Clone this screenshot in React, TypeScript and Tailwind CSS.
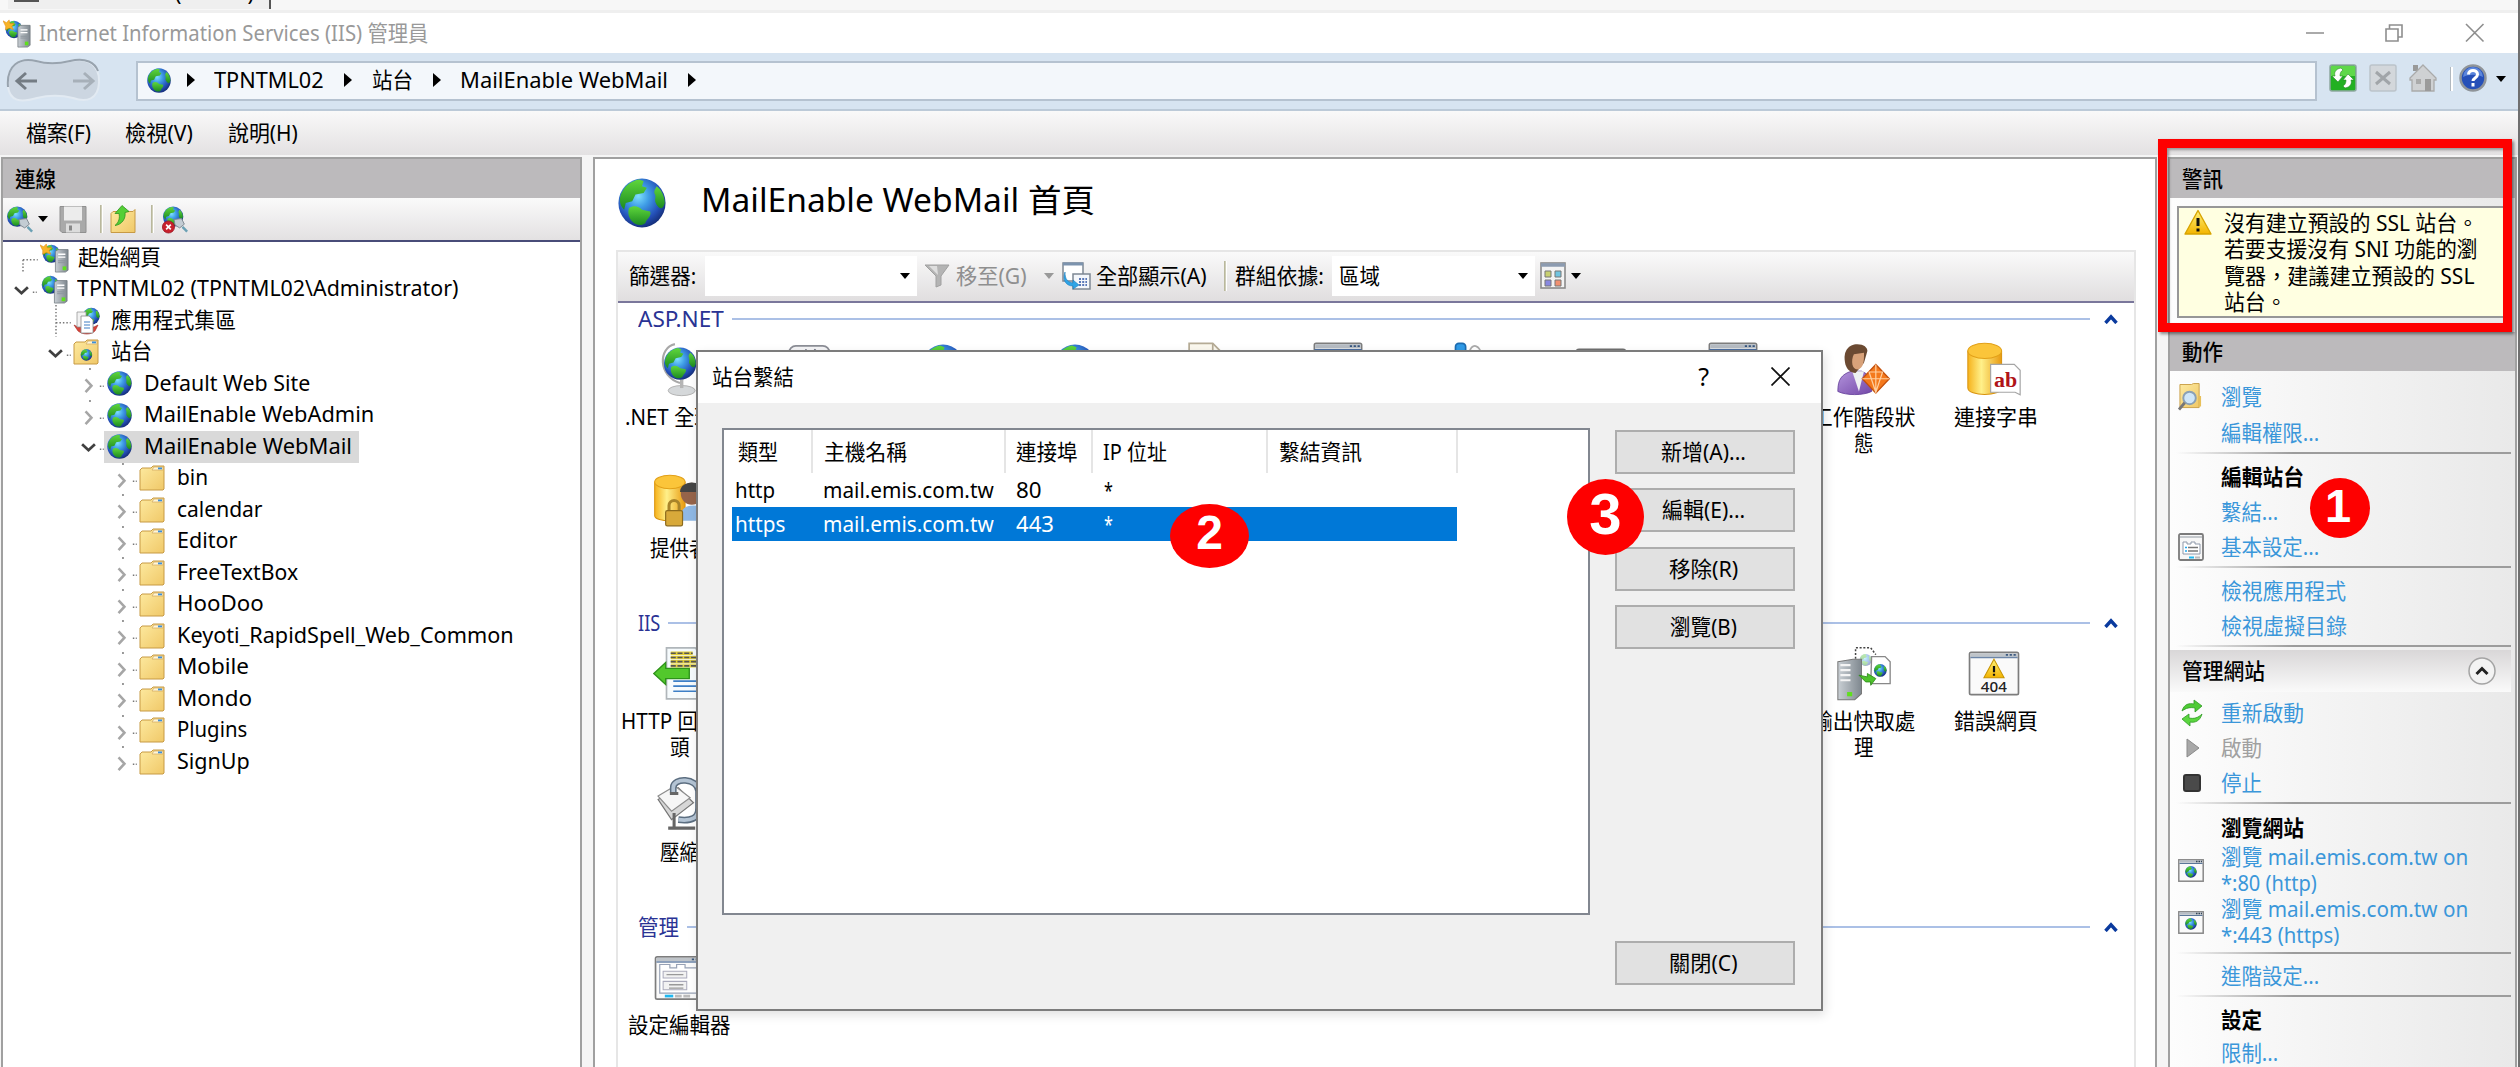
import { useLayoutEffect, useRef, useState, type ReactNode } from "react";

/* Single line of text stretched to a fixed width. */
function T({ w, children, className = "" }: { w: number; children: ReactNode; className?: string }) {
  const ref = useRef<HTMLSpanElement>(null);
  const [k, setK] = useState(1);
  useLayoutEffect(() => {
    const el = ref.current;
    if (el && el.offsetWidth) setK(w / el.offsetWidth);
  }, [w]);
  return (
    <span className={`block shrink-0 whitespace-nowrap ${className}`} style={{ width: w }}>
      <span ref={ref} className="inline-block origin-left" style={{ transform: `scaleX(${k})` }}>
        {children}
      </span>
    </span>
  );
}

function Defs() {
  return (
    <svg className="absolute size-0" aria-hidden="true">
      <defs>
        <radialGradient id="sea" cx="0.42" cy="0.36" r="0.65">
          <stop offset="0" stopColor="#7fe0ff" />
          <stop offset="0.35" stopColor="#3f9de6" />
          <stop offset="0.75" stopColor="#2450b8" />
          <stop offset="1" stopColor="#16307c" />
        </radialGradient>
        <linearGradient id="land" x1="0" y1="0" x2="0" y2="1">
          <stop offset="0" stopColor="#5fd63c" />
          <stop offset="1" stopColor="#1c8a20" />
        </linearGradient>
        <linearGradient id="fold" x1="0" y1="0" x2="1" y2="1">
          <stop offset="0" stopColor="#fdeaa0" />
          <stop offset="1" stopColor="#f0c868" />
        </linearGradient>
        <linearGradient id="gold" x1="0" y1="0" x2="1" y2="0">
          <stop offset="0" stopColor="#f6b21c" />
          <stop offset="0.4" stopColor="#fff08a" />
          <stop offset="1" stopColor="#e89a10" />
        </linearGradient>
        <linearGradient id="steel" x1="0" y1="0" x2="1" y2="0">
          <stop offset="0" stopColor="#c9cfd4" />
          <stop offset="1" stopColor="#7f888f" />
        </linearGradient>
        <linearGradient id="warn" x1="0" y1="0" x2="0" y2="1">
          <stop offset="0" stopColor="#fff27a" />
          <stop offset="1" stopColor="#f3b400" />
        </linearGradient>
        <linearGradient id="purple" x1="0" y1="0" x2="1" y2="1">
          <stop offset="0" stopColor="#b394dc" />
          <stop offset="1" stopColor="#7347a8" />
        </linearGradient>
      </defs>
    </svg>
  );
}

/* Globe in a 32-unit square, reused inside other icons. */
function GlobeG() {
  return (
    <g>
      <circle cx="16" cy="16" r="14.5" fill="url(#sea)" />
      <path d="M3 11C5 6 9 3 14 2l3 1-1 3 3 1-2 3-5 1-2 4-4 1-1 4C2 17 2 14 3 11Z" fill="url(#land)" />
      <path d="M8 19c3-2 6-1 8 1l5 1c1 3-2 4-3 7-3 2-6 1-8-1-2-2-3-5-2-8Z" fill="url(#land)" />
      <path d="M25 6c3 2 5 6 5 10-1 4-3 4-5 1-2-3 0-4-1-6s0-3 1-5Z" fill="url(#land)" />
    </g>
  );
}

function Globe({ className }: { className: string }) {
  return (
    <svg viewBox="0 0 32 32" preserveAspectRatio="none" className={`shrink-0 ${className}`}>
      <GlobeG />
    </svg>
  );
}

function ServerGlobe({ star = false, className = "h-[30px] w-[29px]" }: { star?: boolean; className?: string }) {
  return (
    <svg viewBox="0 0 32 32" preserveAspectRatio="none" className={`shrink-0 ${className}`}>
      <g transform="translate(2 1) scale(.66)">
        <GlobeG />
      </g>
      {star && (
        <path d="M0 2l4 2 3-3 1 4 5 0-3 3 2 4-5-2-4 2 0-4Z" fill="#f8b428" stroke="#e08a10" strokeWidth=".6" />
      )}
      <path d="M17 9l3-2h11v22l-3 2H17Z" fill="url(#steel)" stroke="#6f777d" strokeWidth=".8" />
      <path d="M20 12h8M20 15h8" stroke="#fff" strokeWidth="1.4" />
      <path d="M20 19h8M20 21h8" stroke="#8b949b" strokeWidth="1" />
      <rect x="25" y="25" width="4" height="4" fill="#5fe01c" />
    </svg>
  );
}

function Folder({ globe = false }: { globe?: boolean }) {
  return (
    <svg viewBox="0 0 26 26" className="h-[26px] w-[26px] shrink-0">
      <path d="M1 5l2-2h9l2-2h11v23l-1 1H1Z" fill="url(#fold)" stroke="#c79a45" strokeWidth="1" />
      <path d="M13 5l2-3h9v3Z" fill="#fff6d8" stroke="#d0a860" strokeWidth=".7" />
      <rect x="19" y="2.5" width="4" height="1.8" fill="#3d8fd8" />
      {globe && (
        <g transform="translate(7 9.5) scale(.4)">
          <GlobeG />
        </g>
      )}
    </svg>
  );
}

function AppPool() {
  return (
    <svg viewBox="0 0 28 28" className="h-7 w-7 shrink-0">
      <g transform="translate(9 0) scale(.58)">
        <GlobeG />
      </g>
      <path d="M1 18l4 6c5 4 13 4 17 0l3-6-4 2H5Z" fill="#d9443a" stroke="#a12a24" strokeWidth=".6" />
      <path d="M4 5h9v15H4Z" fill="#f2f2f2" stroke="#999" strokeWidth=".8" />
      <path d="M8 9h8l4 4v13H8Z" fill="#fff" stroke="#8a8a8a" strokeWidth=".8" />
      <path d="M11 15h6M11 18h6M11 21h6" stroke="#3f7fc4" strokeWidth="1.2" />
    </svg>
  );
}

function Caret({ color = "#000", className = "" }: { color?: string; className?: string }) {
  return (
    <svg viewBox="0 0 10 6" className={`h-[6px] w-[10px] shrink-0 ${className}`}>
      <path d="M0 0h10L5 6Z" fill={color} />
    </svg>
  );
}

function Crumb({ className = "" }: { className?: string }) {
  return (
    <svg viewBox="0 0 8 14" className={`h-[14px] w-2 shrink-0 ${className}`}>
      <path d="M0 0L8 7L0 14Z" fill="#000" />
    </svg>
  );
}

function Plug() {
  return (
    <g stroke="#7d878f" fill="#c3ccd3" strokeWidth="1">
      <path d="M14 15l8-1 3 6-5 4-5-3Z" />
      <path d="M23 23l5 5" stroke="#6aa0b4" strokeWidth="2.6" />
    </g>
  );
}

type Node = { icon: "start" | "server" | "pool" | "sites" | "globe" | "folder"; label: string; w: number; sel?: boolean };

const tree: Node[] = [
  { icon: "start", label: "起始網頁", w: 83 },
  { icon: "server", label: "TPNTML02 (TPNTML02\\Administrator)", w: 381 },
  { icon: "pool", label: "應用程式集區", w: 125 },
  { icon: "sites", label: "站台", w: 41 },
  { icon: "globe", label: "Default Web Site", w: 166 },
  { icon: "globe", label: "MailEnable WebAdmin", w: 230 },
  { icon: "globe", label: "MailEnable WebMail", w: 208, sel: true },
  { icon: "folder", label: "bin", w: 31 },
  { icon: "folder", label: "calendar", w: 86 },
  { icon: "folder", label: "Editor", w: 60 },
  { icon: "folder", label: "FreeTextBox", w: 121 },
  { icon: "folder", label: "HooDoo", w: 87 },
  { icon: "folder", label: "Keyoti_RapidSpell_Web_Common", w: 337 },
  { icon: "folder", label: "Mobile", w: 72 },
  { icon: "folder", label: "Mondo", w: 75 },
  { icon: "folder", label: "Plugins", w: 70 },
  { icon: "folder", label: "SignUp", w: 73 },
];

const indent = { start: "pl-[4px]", server: "pl-[3px]", pool: "pl-[37px]", sites: "pl-[37px]", globe: "pl-[70px]", folder: "pl-[103px]" };

function Twisty({ open }: { open: boolean }) {
  return (
    <svg viewBox="0 0 31 32" className="h-[31.5px] w-[31px] shrink-0">
      {open ? (
        <path d="M9 13.5l6.5 6 6.5-6" fill="none" stroke="#404040" strokeWidth="2.8" />
      ) : (
        <>
          <path d="M12.500 11.500l6 6.500-6 6.500" fill="none" stroke="#a6a6a6" strokeWidth="2.600" />
          <path d="M17 0v2" stroke="#777" strokeWidth="1.5" />
        </>
      )}
      <path d="M27 18.500h4" stroke="#777" strokeWidth="1.500" strokeDasharray="1.500 1.500" />
    </svg>
  );
}

function Leaf({ first }: { first: boolean }) {
  return (
    <svg viewBox="0 0 31 32" className="h-[31.5px] w-[31px] shrink-0" fill="none" stroke="#777" strokeWidth="1.5" strokeDasharray="1.5 2">
      <path d={first ? "M16 18h15M16 18v14" : "M16 0v32M16 18h15"} />
    </svg>
  );
}

function TreeRow({ n, first }: { n: Node; first: boolean }) {
  const leaf = n.icon === "start" || n.icon === "pool";
  return (
    <div className={`flex h-[31.5px] items-center ${indent[n.icon]}`}>
      {leaf ? <Leaf first={first} /> : <Twisty open={n.icon === "server" || n.icon === "sites" || !!n.sel} />}
      <div className={`flex h-[31.5px] items-center pr-[7px] pl-[2px] ${n.sel ? "bg-[#d9d9d9]" : ""}`}>
        <div className="flex w-[38px] items-center">
          {n.icon === "start" && <ServerGlobe star />}
          {n.icon === "server" && <ServerGlobe />}
          {n.icon === "pool" && <AppPool />}
          {n.icon === "sites" && <Folder globe />}
          {n.icon === "globe" && <Globe className="h-[27px] w-[27px]" />}
          {n.icon === "folder" && <Folder />}
        </div>
        <T w={n.w} className="-mt-[2px]">{n.label}</T>
      </div>
    </div>
  );
}

function WindowIcon({ children, className = "h-[55px] w-[54px]" }: { children?: ReactNode; className?: string }) {
  return (
    <svg viewBox="0 0 32 32" className={`shrink-0 ${className}`}>
      <rect x="1.500" y="3.500" width="29" height="25" rx="1" fill="#fafafa" stroke="#7d7d7d" strokeWidth="1" />
      <path d="M2 4h28v2H2Z" fill="#bfc4c9" />
      <path d="M2 6.500h28" stroke="#6d86a8" strokeWidth=".8" />
      <path d="M23 5h6" stroke="#3c5a80" strokeWidth="1" strokeDasharray="1.300 1" />
      {children}
    </svg>
  );
}

const pic = "h-[55px] w-[54px] shrink-0";
const featureIcons: Record<string, ReactNode> = {
  net: (
    <svg viewBox="0 0 32 32" className={pic}>
      <ellipse cx="17" cy="28.500" rx="8" ry="3" fill="#d5d8da" stroke="#aaa" strokeWidth=".5" />
      <path d="M16 22h2v5h-2Z" fill="#b5b5b5" />
      <path d="M13 1C3 3 3 20 16 24" fill="none" stroke="#a8a8a8" strokeWidth="1.300" />
      <g transform="translate(5.500 2) scale(.66)">
        <GlobeG />
      </g>
    </svg>
  ),
  doc: (
    <svg viewBox="0 0 32 32" className={pic}>
      <path d="M6 .5h14l5 5V31H6Z" fill="#fbf8ee" stroke="#b5ab95" />
      <path d="M20 .5v5h5" fill="none" stroke="#b5ab95" />
    </svg>
  ),
  papers: (
    <svg viewBox="0 0 32 32" className={pic}>
      <rect x="3" y="2" width="24" height="18" rx="4" fill="#f4f4f6" stroke="#8b8d95" />
      <path d="M7 5h4M13 4v4M18 4l3 3" stroke="#66697a" />
    </svg>
  ),
  globe: <Globe className="h-[55px] w-[50px]" />,
  blue: (
    <svg viewBox="0 0 32 32" className={pic}>
      <rect x="8" y=".5" width="6" height="20" rx="2" fill="#2f9be8" stroke="#1d6cb0" />
      <path d="M16 6c2-6 6-5 8 2" fill="none" stroke="#aaa" />
    </svg>
  ),
  low: (
    <svg viewBox="0 0 32 32" className={pic}>
      <rect x="1" y="4" width="30" height="20" rx="2" fill="#9b9b9b" stroke="#6f6f6f" />
    </svg>
  ),
  win: (
    <svg viewBox="0 0 32 32" className={pic}>
      <rect x="2" y=".5" width="28" height="28" rx="1" fill="#fff" stroke="#7d7d7d" />
      <path d="M2.500 1h27v2.500h-27Z" fill="#b5bbc2" />
      <path d="M2 4.200h28" stroke="#4a6da0" strokeWidth=".8" />
      <path d="M23 2.200h6" stroke="#35557f" strokeDasharray="1.300 1" />
    </svg>
  ),
  user: (
    <svg viewBox="0 0 32 32" className={pic}>
      <path d="M.5 29c0-7 2-10 8-12h6c5 2 6 5 6 12-5 2.500-15 2.500-20 0Z" fill="url(#purple)" stroke="#65409a" strokeWidth=".5" />
      <path d="M9 17l4 12 3-12Z" fill="#eef0f2" />
      <path d="M5 13C3 5 7 1 12 1c4 0 6 2 6 4l-2 7-5 6c-3 0-5-2-6-5Z" fill="#6b4a32" />
      <path d="M10 7l6-1c0 5 0 9-4 10-3 0-4-5-2-9Z" fill="#d8a27a" />
      <path d="M23 13l8 8.500-8 8.500-8-8.500Z" fill="#f4791c" stroke="#c4500c" strokeWidth=".8" />
      <path d="M23 13v17M15 21.500h16M19 17.500h8l-4 12Z" fill="none" stroke="#ffd0a0" strokeWidth=".7" />
    </svg>
  ),
  db: (
    <svg viewBox="0 0 32 32" className={`-ml-[3px] ${pic}`}>
      <path d="M.5 5v22c0 5 20 5 20 0V5Z" fill="url(#gold)" stroke="#d8920c" strokeWidth=".6" />
      <ellipse cx="10.500" cy="5" rx="10" ry="4.500" fill="#fbc53a" stroke="#e2a018" strokeWidth=".6" />
      <path d="M14 13h14l3.500 3.500V31l-3-1.500-14.500 0Z" fill="#fff" stroke="#a5a5a5" strokeWidth=".7" />
      <text x="16" y="26.500" fontFamily="Liberation Serif" fontWeight="700" fontSize="13" fill="#b01418">ab</text>
    </svg>
  ),
  provider: (
    <svg viewBox="0 0 32 32" className={pic}>
      <path d="M1 5v20c0 4 18 4 18 0V5Z" fill="url(#gold)" stroke="#d8920c" strokeWidth=".6" />
      <ellipse cx="10" cy="5" rx="9" ry="4" fill="#fbc53a" stroke="#e2a018" strokeWidth=".6" />
      <path d="M16 28c0-7 3-9 8-9s8 3 8 9Z" fill="#8fb8e4" />
      <circle cx="23" cy="12" r="6.500" fill="#96644a" />
      <path d="M16 11c0-7 13-8 14 0Z" fill="#444" />
      <path d="M9.500 22v-3c0-4 6-4 6 0v3" fill="none" stroke="#a8842a" strokeWidth="1.800" />
      <rect x="7.500" y="22" width="10" height="9" rx="1" fill="#d8a93a" stroke="#8c6a1c" strokeWidth=".7" />
    </svg>
  ),
  http: (
    <svg viewBox="0 0 32 32" className={pic}>
      <path d="M8 .8h17l4 4V31H8Z" fill="#f6fbfd" stroke="#b0b6ba" />
      <path d="M10.500 4h13M10.500 6.500h16M10.500 9h16M10.500 11.500h16" stroke="#e2cf3c" strokeWidth="2" />
      <path d="M10.500 4h13M10.500 6.500h16M10.500 9h16M10.500 11.500h16" stroke="#555" strokeWidth="1" strokeDasharray="3 1" />
      <path d="M.5 16l7-6.500V13h14v6H7.500v3.500Z" fill="#52c82c" stroke="#2e931a" strokeWidth=".8" />
      <path d="M12 20.500h14M12 23.500h14M12 26.500h14" stroke="#3d7fc6" strokeWidth="1" />
    </svg>
  ),
  compress: (
    <svg viewBox="0 0 32 32" className={pic}>
      <path d="M3 13l12-7 9 9-13 10Z" fill="#d7d7d7" stroke="#777" strokeWidth=".7" />
      <path d="M3 11l10-6 9 7-11 8Z" fill="#f6f6f6" stroke="#8d8d8d" strokeWidth=".7" />
      <path d="M12 9V6c0-6 14-6 15 2v10c0 6-4 8-12 7" fill="none" stroke="#5c6e80" strokeWidth="4" />
      <path d="M12 9V6c0-6 14-6 15 2v10c0 6-4 8-12 7" fill="none" stroke="#b4c4d4" strokeWidth="2.200" />
      <path d="M10 9.500h5M12.500 21v9M9 30h16" fill="none" stroke="#666" strokeWidth="1.800" />
    </svg>
  ),
  config: (
    <WindowIcon className="h-[60px] w-[54px]">
      <path d="M4 8h6v2h4V8h5v2h9v15H4Z" fill="#fff" stroke="#98a2b5" strokeWidth=".7" />
      <path d="M6 12h14v4H6ZM6 18h14v5H6Z" fill="#f2f2f2" stroke="#aab" strokeWidth=".6" />
      <path d="M8 14h10M9.500 20h8.500M9.500 22h8.500" stroke="#999" strokeWidth=".8" />
      <path d="M7 26.700h5" stroke="#20b8f0" strokeWidth="1.600" />
      <path d="M13 26.700h4M18 26.700h4" stroke="#bbb" strokeWidth="1.600" />
    </WindowIcon>
  ),
  cache: (
    <svg viewBox="0 0 32 32" className={pic}>
      <path d="M11 16V.8h9l3 4" fill="none" stroke="#444" strokeWidth=".9" strokeDasharray="1.200 1" />
      <g opacity=".4" transform="translate(13 4) scale(.25)">
        <GlobeG />
      </g>
      <path d="M.5 9l9-1.500h5V28l-4 3.500H.5Z" fill="url(#steel)" stroke="#777" strokeWidth=".6" />
      <path d="M2 11h6M2 14h6M2 17h6M2 20h6" stroke="#f4f4f4" strokeWidth="1.300" />
      <rect x="6" y="27" width="3" height="2.500" fill="#5fe01c" />
      <path d="M20.500 6h8l3 3v13H20Z" fill="#fff" stroke="#888" strokeWidth=".8" />
      <g transform="translate(21.500 10) scale(.26)">
        <GlobeG />
      </g>
      <path d="M13 17l5 1v-2l5 3-3 4v-2l-3 0Z" fill="#4fc22c" stroke="#2c8c18" strokeWidth=".5" />
    </svg>
  ),
  error: (
    <WindowIcon className="-ml-[3px] h-[55px] w-[54px]">
      <path d="M16 7.500l6 11H10Z" fill="url(#warn)" stroke="#c89400" strokeWidth=".6" />
      <path d="M16 11.500v3.700M16 16.200v1.200" stroke="#111" strokeWidth="1.300" />
      <text x="8.200" y="26.800" fontFamily="Noto Sans" fontWeight="500" fontSize="9" fill="#222">404</text>
    </WindowIcon>
  ),
};

type Cell = { icon?: string; lines?: [string, number][] };
const blank: Cell = {};
const gap = (n: number): Cell[] => Array.from({ length: n }, () => blank);

function Feature({ c }: { c: Cell }) {
  return (
    <div className="flex h-[131px] w-[131.6px] shrink-0 flex-col items-center">
      <div className="flex h-[55px] w-[54px] items-center justify-center">{c.icon && featureIcons[c.icon]}</div>
      <div className="mt-[7px] flex flex-col items-center">
        {c.lines?.map(([t, w]) => (
          <T key={t} w={w} className="h-[26px] leading-[26px]">{t}</T>
        ))}
      </div>
    </div>
  );
}

function Section({ title, w, rows }: { title: string; w: number; rows: Cell[][] }) {
  return (
    <section className="mb-[3px]">
      <div className="mb-[7px] flex h-[32px] items-center pl-[20px]">
        <T w={w} className="text-[#2a3394]">{title}</T>
        <div className="ml-[8px] h-[2px] flex-1 bg-[#abc0e6]" />
        <svg viewBox="0 0 14 10" className="mr-[16px] ml-[14px] h-[10px] w-[14px]">
          <path d="M1.500 9L7 2.800 12.500 9" fill="none" stroke="#0a3a9e" strokeWidth="3.400" />
        </svg>
      </div>
      {rows.map((r, i) => (
        <div key={i} className="-ml-[4px] flex">
          {r.map((c, j) => (
            <Feature key={j} c={c} />
          ))}
        </div>
      ))}
    </section>
  );
}

function DialogButton({ label, w, className }: { label: string; w: number; className: string }) {
  return (
    <div className={`flex h-[44px] w-[180px] items-center justify-center border-2 border-[#adadad] bg-[#e1e1e1] pr-[3px] pb-[1px] ${className}`}>
      <T w={w}>{label}</T>
    </div>
  );
}

function Dialog() {
  return (
    <div className="absolute top-[350px] left-[696px] h-[661px] w-[1127px] border-2 border-[#7c7c7c] bg-[#f0f0f0] shadow-[2px_4px_10px_rgba(0,0,0,0.12)]">
      <div className="flex h-[51px] items-center bg-white pb-[2px] pl-[14px]">
        <T w={82} className="mr-auto">站台繫結</T>
        <span className="text-[25px] leading-none">?</span>
        <svg viewBox="0 0 19 19" className="mr-[31px] ml-[62px] h-[19px] w-[19px]">
          <path d="M.5.5l18 18M18.500.5l-18 18" stroke="#111" strokeWidth="1.700" />
        </svg>
      </div>
      <div className="flex pt-[25px] pl-[24px]">
        <div className="h-[487px] w-[868px] border-2 border-[#828790] bg-white">
          <div className="flex h-[43px] items-center">
            <div className="flex h-full w-[89px] items-center border-r-2 border-[#e5e5e5] pl-[14px]"><T w={40}>類型</T></div>
            <div className="flex h-full w-[193px] items-center border-r-2 border-[#e5e5e5] pl-[11px]"><T w={83}>主機名稱</T></div>
            <div className="flex h-full w-[87px] items-center border-r-2 border-[#e5e5e5] pl-[10px]"><T w={62}>連接埠</T></div>
            <div className="flex h-full w-[175px] items-center border-r-2 border-[#e5e5e5] pl-[10px]"><T w={64}>IP 位址</T></div>
            <div className="flex h-full w-[190px] items-center border-r-2 border-[#e5e5e5] pl-[11px]"><T w={83}>繫結資訊</T></div>
          </div>
          <div className="ml-[8px] flex h-[34px] items-center pl-[3px]">
            <T w={40} className="mr-[48px]">http</T>
            <T w={171} className="mr-[22px]">mail.emis.com.tw</T>
            <T w={26} className="mr-[62px]">80</T>
            <T w={9}>*</T>
          </div>
          <div className="ml-[8px] flex h-[34px] w-[725px] items-center bg-[#0078d7] pb-[1px] pl-[3px] text-white">
            <T w={50} className="mr-[38px]">https</T>
            <T w={171} className="mr-[22px]">mail.emis.com.tw</T>
            <T w={38} className="mr-[50px]">443</T>
            <T w={9}>*</T>
          </div>
        </div>
        <div className="ml-[25px] flex flex-col pt-[2px]">
          <DialogButton label="新增(A)..." w={85} className="" />
          <DialogButton label="編輯(E)..." w={83} className="mt-[14px]" />
          <DialogButton label="移除(R)" w={69} className="mt-[15px]" />
          <DialogButton label="瀏覽(B)" w={67} className="mt-[14px]" />
          <DialogButton label="關閉(C)" w={69} className="mt-[292px]" />
        </div>
      </div>
    </div>
  );
}

function Rule({ className = "" }: { className?: string }) {
  return <div className={`mr-[4px] ml-[6px] h-[2px] bg-linear-to-r from-transparent via-[#9c9c9c] via-35% to-[#9c9c9c] ${className}`} />;
}

function Action({ label, w, icon, kind = "link", className = "h-[35px]" }: { label: string; w: number; icon?: ReactNode; kind?: "link" | "off" | "head"; className?: string }) {
  return (
    <div className={`flex items-center ${className}`}>
      <div className="flex w-[51px] shrink-0 items-center pl-[8px]">{icon}</div>
      <T w={w} className={kind === "link" ? "text-[#3b97da]" : kind === "off" ? "text-[#a0a0a0]" : "font-bold"}>{label}</T>
    </div>
  );
}

const searchIcon = (
  <svg viewBox="0 0 26 30" className="h-[30px] w-[25px]">
    <path d="M2 2h12l2-1h6v25H2Z" fill="url(#fold)" stroke="#caa04a" />
    <path d="M22 14h2v11h-3Z" fill="#e8c05a" />
    <circle cx="12" cy="16" r="6.500" fill="#cfe6f8" stroke="#8aa0b5" strokeWidth="2" />
    <path d="M7 21l-6 7" stroke="#777" strokeWidth="3" />
  </svg>
);
const settingsIcon = (
  <svg viewBox="0 0 26 28" className="h-[28px] w-[26px]">
    <rect x="1" y="1" width="24" height="26" rx="1.500" fill="#f7f7f7" stroke="#7b7b7b" strokeWidth="1.800" />
    <path d="M2 4h22" stroke="#c4c8cc" strokeWidth="2" />
    <path d="M5 9h4v2h4V9h4v2h5v10H5Z" fill="#fff" stroke="#8f99aa" />
    <path d="M7 14.500h2M7 18h2" stroke="#20a8f0" strokeWidth="1.500" />
    <path d="M10 14.500h10M10 18h10" stroke="#777" strokeWidth="1.500" />
    <path d="M11 24.500h5" stroke="#20b8f0" strokeWidth="2" />
    <path d="M17 24.500h5" stroke="#bbb" strokeWidth="2" />
  </svg>
);
const siteIcon = (
  <svg viewBox="0 0 26 23" className="h-[23px] w-[26px]">
    <rect x=".8" y=".8" width="24.400" height="21.400" fill="#fafafa" stroke="#888" strokeWidth="1.500" />
    <path d="M1.500 2.500h23" stroke="#b6bdc5" strokeWidth="2.500" />
    <path d="M1.500 4.500h23" stroke="#5b7698" strokeWidth="1" />
    <path d="M18 2.500h6" stroke="#345" strokeWidth="1.500" strokeDasharray="1.500 1" />
    <g transform="translate(6.500 6.500) scale(.4)">
      <GlobeG />
    </g>
  </svg>
);
const restartIcon = (
  <svg viewBox="0 0 22 28" className="ml-[3px] h-[28px] w-[22px]">
    <path d="M1 12C3 5 8 4 13 5V1l8 6-7 6V9C9 8 5 9 1 12Z" fill="#4fcb35" stroke="#2f9a25" strokeWidth=".8" />
    <path d="M21 15c-2 7-7 9-12 8v4l-8-7 7-5v4c5 1 9 0 13-4Z" fill="#5bd63f" stroke="#2f9a25" strokeWidth=".8" />
  </svg>
);

function RightPane() {
  return (
    <aside className="w-[349px] shrink-0 border-2 border-b-0 border-[#a0a0a0] bg-linear-to-r from-[#fdfdfd] to-[#e9e9e9]">
      <div className="flex h-[39px] items-center bg-[#bcbabc] pl-[12px]"><T w={41} className="font-medium">警訊</T></div>
      <div className="mt-[8px] mr-[8px] ml-[7px] flex h-[112px] border-2 border-[#979797] bg-[#ffffe1]">
        <svg viewBox="0 0 28 27" className="mt-[1px] ml-[5px] h-[27px] w-[28px]">
          <path d="M14 1.500L27 25H1Z" fill="url(#warn)" stroke="#d8a400" strokeWidth="1.400" strokeLinejoin="round" />
          <path d="M14 9v8M14 19.500v3" stroke="#111" strokeWidth="3" />
        </svg>
        <div className="ml-[12px] pt-[2px] leading-[26.300px]">
          <T w={254}>沒有建立預設的 SSL 站台。</T>
          <T w={254}>若要支援沒有 SNI 功能的瀏</T>
          <T w={250}>覽器，建議建立預設的 SSL</T>
          <T w={63}>站台。</T>
        </div>
      </div>
      <div className="mt-[14px] flex h-[39px] items-center bg-[#bcbabc] pl-[12px]"><T w={41} className="font-medium">動作</T></div>
      <Action label="瀏覽" w={41} icon={searchIcon} className="mt-[8px] h-[36px]" />
      <Action label="編輯權限..." w={98} />
      <Rule className="mt-[2px]" />
      <Action label="編輯站台" w={83} kind="head" className="mt-[5px] h-[35px]" />
      <Action label="繫結..." w={57} />
      <Action label="基本設定..." w={98} icon={settingsIcon} />
      <Rule className="mt-[2px]" />
      <Action label="檢視應用程式" w={125} className="mt-[5px] h-[35px]" />
      <Action label="檢視虛擬目錄" w={126} />
      <Rule className="mt-[2px]" />
      <div className="mt-[3px] mr-[4px] flex h-[42px] items-center bg-linear-to-b from-[#d9d7d8] to-[#fafafa] pl-[12px]">
        <T w={83} className="font-medium">管理網站</T>
        <svg viewBox="0 0 28 28" className="mr-[15px] ml-auto h-[28px] w-[28px]">
          <circle cx="14" cy="14" r="13" fill="#f3f3f3" stroke="#a4a4a4" strokeWidth="1.500" />
          <path d="M8.500 17L14 11.500 19.500 17" fill="none" stroke="#222" strokeWidth="3" />
        </svg>
      </div>
      <Action label="重新啟動" w={83} icon={restartIcon} className="mt-[3px] h-[35px]" />
      <Action
        label="啟動" w={41} kind="off"
        icon={<svg viewBox="0 0 14 20" className="ml-[8px] h-[20px] w-[14px]"><path d="M1 1l12 9L1 19Z" fill="#a8a8a8" stroke="#8a8a8a" /></svg>}
      />
      <Action label="停止" w={41} icon={<div className="ml-[5px] size-[18px] rounded-[3px] border-2 border-[#333] bg-[#4a4a4a]" />} />
      <Rule className="mt-[2px]" />
      <Action label="瀏覽網站" w={83} kind="head" className="mt-[7px] h-[33px]" />
      {[["*:80 (http)", 96], ["*:443 (https)", 118]].map(([t, w]) => (
        <div key={t} className="flex h-[52px] items-center">
          <div className="w-[51px] shrink-0 pl-[8px]">{siteIcon}</div>
          <div className="leading-[26px] text-[#3b97da]">
            <T w={247}>瀏覽 mail.emis.com.tw on</T>
            <T w={Number(w)}>{t}</T>
          </div>
        </div>
      ))}
      <Rule className="mt-[4px]" />
      <Action label="進階設定..." w={98} className="mt-[4px] h-[35px]" />
      <Rule className="mt-[2px]" />
      <Action label="設定" w={41} kind="head" className="mt-[5px] h-[35px]" />
      <Action label="限制..." w={57} className="h-[32px]" />
    </aside>
  );
}

function Sep({ className }: { className: string }) {
  return <div className={`w-[3px] shrink-0 border-r border-l border-r-white border-l-[#b9b89c] bg-[#cfcebb] ${className}`} />;
}

export default function App() {
  return (
    <div
      lang="zh-Hant"
      className="relative flex h-[1067px] w-[2520px] flex-col overflow-hidden border-r-2 border-[#6f6f6f] bg-white font-['Noto_Sans','Noto_Sans_CJK_TC',sans-serif] text-[21.500px] leading-[28px] text-black"
    >
      <Defs />
      <div className="h-[13px] shrink-0 overflow-hidden border-b-[3px] border-[#efefef] bg-[#f7f7f7] pl-[8px]">
        <div className="flex h-[9px] w-[263px] overflow-hidden border-r-2 border-[#555] bg-[#efefef]">
          <div className="ml-[6px] h-[2px] w-[25px] bg-[#555]" />
          <div className="-mt-[21px] ml-[136px] leading-[28px]">(</div>
          <div className="-mt-[21px] ml-[66px] leading-[28px]">)</div>
        </div>
      </div>

      <header className="flex h-[40px] shrink-0 items-center pl-[3px]">
        <ServerGlobe star className="h-[29px] w-[28px]" />
        <T w={389} className="ml-[8px] text-[#999]">Internet Information Services (IIS) 管理員</T>
        <svg viewBox="0 0 180 20" className="mr-[33px] ml-auto h-[20px] w-[180px]" fill="none" stroke="#8e8e8e" strokeWidth="1.600">
          <path d="M1 10h18M81 6h12v12H81ZM84.500 6V2H97v12h-4M161 1l17.500 17.500M178.500 1L161 18.500" />
        </svg>
      </header>

      <nav className="flex h-[58px] shrink-0 items-center border-b-2 border-[#bccad8] bg-[#d7e4f1] pl-[6px]">
        <svg viewBox="0 0 96 48" className="h-[48px] w-[96px]" fill="none">
          <path d="M2 30C0 8 14 0 30 4c10 3 22 3 34 0 18-4 30 4 29 22-1 16-12 20-26 15-12-3-24-3-36 0C14 46 4 44 2 30Z" fill="#ccd6e1" stroke="#e2eaf2" strokeWidth="2" />
          <path d="M2 30C0 8 14 0 30 4c10 3 22 3 34 0 16-4 25 2 28 10" stroke="#98a3ae" strokeWidth="2" />
          <path d="M31 24H12M20 16l-9 8 9 8" stroke="#747c84" strokeWidth="3" />
          <path d="M67 24h19M78 16l9 8-9 8" stroke="#a7b0b9" strokeWidth="3" />
        </svg>
        <div className="ml-[34px] flex h-[40px] w-[2181px] items-center border-2 border-[#b5c2d0] bg-[#f3f7fb] pb-[2px] pl-[8px]">
          <Globe className="h-[27px] w-[26px]" />
          <Crumb className="ml-[15px]" />
          <T w={110} className="ml-[19px]">TPNTML02</T>
          <Crumb className="ml-[20px]" />
          <T w={41} className="ml-[20px]">站台</T>
          <Crumb className="ml-[20px]" />
          <T w={208} className="ml-[19px]">MailEnable WebMail</T>
          <Crumb className="ml-[20px]" />
        </div>
        <svg viewBox="0 0 28 28" className="mb-[6px] ml-[12px] h-[28px] w-[28px]">
          <rect x="1" y="1" width="26" height="26" rx="2" fill="#22b022" stroke="#8ea8a0" strokeWidth="1.500" />
          <rect x="2" y="2" width="24" height="10" fill="#5fd84a" />
          <path d="M12 4C6 5 5 9 6 12H3l6 6 5-6h-3c0-3 1-5 3-6ZM16 24c6-1 7-5 6-8h3l-6-6-5 6h3c0 3-1 5-3 6Z" fill="#fff" stroke="#2a8a2a" strokeWidth=".6" />
        </svg>
        <svg viewBox="0 0 28 28" className="mb-[6px] ml-[12px] h-[28px] w-[28px]">
          <rect x="1" y="1" width="26" height="26" rx="2" fill="#d3d7db" stroke="#bcc3ca" strokeWidth="1.500" />
          <path d="M7 8l14 12M21 8L7 20" stroke="#a1a5a9" strokeWidth="3" />
        </svg>
        <svg viewBox="0 0 28 28" className="mb-[6px] ml-[12px] h-[28px] w-[28px]">
          <path d="M4 1h5v6H4Z" fill="#999" />
          <path d="M14 1L27 14v2h-2v11H3V16H1v-2Z" fill="#cfd1d3" stroke="#aaa" strokeWidth="1.300" />
          <path d="M16 15h6v12h-6Z" fill="#9b9b9b" />
          <path d="M7 15h5v5H7Z" fill="#aaa" />
        </svg>
        <div className="mb-[4px] ml-[13px] h-[24px] w-[3px] border-l border-[#b0b8bf] bg-white" />
        <svg viewBox="0 0 28 28" className="mb-[6px] ml-[6px] h-[28px] w-[28px]">
          <circle cx="14" cy="14" r="12.500" fill="#2650b8" stroke="#8f9499" strokeWidth="2.500" />
          <path d="M4 13a10 10 0 0 1 20 0c-6-3-14-3-20 0Z" fill="#5c86dc" />
          <path d="M9.500 10.500c0-5.500 9-5.500 9 0 0 3.500-4.500 3.500-4.500 6.500M14 19v3.500" fill="none" stroke="#fff" strokeWidth="3" />
        </svg>
        <Caret className="mb-[4px] ml-[9px]" />
      </nav>

      <div className="flex h-[44px] shrink-0 items-center bg-linear-to-b from-[#f9f9f9] to-[#e3e1e2] pl-[26px]">
        <T w={65}>檔案(F)</T>
        <T w={68} className="ml-[34px]">檢視(V)</T>
        <T w={70} className="ml-[35px]">說明(H)</T>
      </div>

      <div className="flex flex-1 gap-[11px] overflow-hidden bg-[#f5f5f5] pt-[2px] pl-[1px]">
        <aside className="flex w-[581px] shrink-0 flex-col border-2 border-b-0 border-[#a0a0a0] bg-white">
          <div className="flex h-[39px] shrink-0 items-center bg-[#bcbabc] pl-[12px]"><T w={41} className="font-medium">連線</T></div>
          <div className="flex h-[44px] shrink-0 items-center border-b-2 border-[#484c78] bg-linear-to-b from-[#fafafa] to-[#e3e1e2] pl-[3px]">
            <svg viewBox="0 0 30 30" className="h-[29px] w-[28px]">
              <g transform="scale(.75)"><GlobeG /></g>
              <Plug />
            </svg>
            <Caret className="ml-[4px]" />
            <svg viewBox="0 0 28 28" className="ml-[11px] h-[29px] w-[28px]">
              <path d="M1 1h26v26H3l-2-2Z" fill="#a9a9a9" stroke="#909090" />
              <path d="M5 1h18v14H5Z" fill="#ececec" />
              <path d="M7 18h14v9H7Z" fill="#dcdcdc" />
              <path d="M10 20h3v5h-3Z" fill="#888" />
            </svg>
            <Sep className="ml-[13px] h-[28px]" />
            <svg viewBox="0 0 26 28" className="ml-[7px] h-[29px] w-[26px]">
              <path d="M1 8l2-2h20l2-2v23H1Z" fill="url(#fold)" stroke="#c79a45" />
              <path d="M5 20c4-3 5-8 4-12H5l7-8 7 6-4 1c1 6-3 12-10 13Z" fill="#54cf35" stroke="#2f931e" strokeWidth=".8" />
            </svg>
            <Sep className="ml-[15px] h-[28px]" />
            <svg viewBox="0 0 30 30" className="ml-[7px] h-[29px] w-[28px]">
              <g transform="translate(1 0) scale(.75)"><GlobeG /></g>
              <Plug />
              <circle cx="8" cy="23" r="6.500" fill="#c8202c" stroke="#961420" strokeWidth=".8" />
              <path d="M5.500 20.500l5 5M10.500 20.500l-5 5" stroke="#fff" strokeWidth="1.800" />
            </svg>
          </div>
          <div>
            {tree.map((n, i) => (
              <TreeRow key={n.label} n={n} first={i === 0} />
            ))}
          </div>
        </aside>

        <main className="flex w-[1564px] shrink-0 flex-col border-2 border-b-0 border-[#a0a0a0] bg-white pr-[19px] pl-[21px]">
          <div className="flex h-[91px] shrink-0 items-center pb-[9px]">
            <div className="flex w-[85px] pt-[6px]"><Globe className="h-[54px] w-[52px]" /></div>
            <T w={394} className="text-[32px] leading-[40px]">MailEnable WebMail 首頁</T>
          </div>
          <div className="flex flex-1 flex-col border-2 border-b-0 border-[#e6e6e6]">
            <div className="flex h-[51px] shrink-0 items-center border-b-2 border-[#7a779b] bg-linear-to-b from-[#fafafa] to-[#e0dedf] pb-[2px] pl-[11px]">
              <T w={67}>篩選器:</T>
              <div className="ml-[9px] flex h-[40px] w-[212px] items-center justify-end bg-white pr-[7px]"><Caret /></div>
              <svg viewBox="0 0 26 24" className="ml-[7px] h-[24px] w-[26px]">
                <path d="M1 1h24l-8 11v9l-5 2V12Z" fill="#b4b4b4" stroke="#a0a0a0" />
                <path d="M5 2h8l1 9Z" fill="#dedede" />
              </svg>
              <T w={71} className="ml-[6px] text-[#8f8f8f]">移至(G)</T>
              <Caret color="#999" className="ml-[17px]" />
              <svg viewBox="0 0 29 28" className="ml-[8px] h-[28px] w-[29px]">
                <path d="M1 1h20v18H1Z" fill="#fff" stroke="#7d8894" strokeWidth="1.500" />
                <path d="M1 2h20" stroke="#7c93ae" strokeWidth="3" />
                <path d="M11 12h17v15H11Z" fill="#f4f7fb" stroke="#7d8894" strokeWidth="1.500" />
                <path d="M17 17h8M17 20h8M17 23h8" stroke="#5a78b8" strokeWidth="1.800" strokeDasharray="2 1.200" />
                <path d="M3 10c0 8 3 10 8 11v-3l6 5-6 4v-3C4 24 0 18 3 10Z" fill="#2fa4e6" stroke="#1c7cbc" strokeWidth=".6" />
              </svg>
              <T w={111} className="ml-[5px]">全部顯示(A)</T>
              <Sep className="ml-[17px] h-[30px]" />
              <T w={89} className="ml-[8px]">群組依據:</T>
              <div className="ml-[8px] flex h-[40px] w-[203px] items-center justify-between bg-white pr-[7px] pl-[7px]">
                <T w={41}>區域</T>
                <Caret />
              </div>
              <svg viewBox="0 0 26 27" className="ml-[5px] h-[27px] w-[26px]">
                <rect x="1" y="1" width="24" height="25" fill="#f3f3f3" stroke="#8a8a8a" strokeWidth="1.600" />
                <path d="M1 3h24" stroke="#8c9bb0" strokeWidth="3.500" />
                <path d="M5 9h6v6H5Z" fill="#c8d070" stroke="#777" />
                <path d="M15 9h6v6h-6Z" fill="#70c4e0" stroke="#777" />
                <path d="M5 18h6v6H5Z" fill="#8888e0" stroke="#777" />
                <path d="M15 18h6v6h-6Z" fill="#f09070" stroke="#777" />
              </svg>
              <Caret className="ml-[5px]" />
            </div>
            <Section
              title="ASP.NET" w={86}
              rows={[
                [
                  { icon: "net", lines: [[".NET 全球化", 110]] },
                  { icon: "papers" }, { icon: "globe" }, { icon: "globe" }, { icon: "doc" }, { icon: "win" },
                  { icon: "blue" }, { icon: "low" }, { icon: "win" },
                  { icon: "user", lines: [["工作階段狀", 104], ["態", 20]] },
                  { icon: "db", lines: [["連接字串", 84]] },
                ],
                [{ icon: "provider", lines: [["提供者", 59]] }],
              ]}
            />
            <Section
              title="IIS" w={22}
              rows={[
                [
                  { icon: "http", lines: [["HTTP 回應標", 118], ["頭", 20]] },
                  ...gap(8),
                  { icon: "cache", lines: [["輸出快取處", 104], ["理", 20]] },
                  { icon: "error", lines: [["錯誤網頁", 84]] },
                ],
                [{ icon: "compress", lines: [["壓縮", 39]] }],
              ]}
            />
            <Section title="管理" w={41} rows={[[{ icon: "config", lines: [["設定編輯器", 103]] }]]} />
          </div>
        </main>
        <RightPane />
      </div>

      <Dialog />

      <div className="absolute top-[139px] left-[2158px] h-[193px] w-[354px] border-[9px] border-[#fe0000] shadow-[2px_2px_3px_rgba(0,0,0,0.45),inset_2px_2px_3px_rgba(0,0,0,0.35)]" />
      <div className="absolute top-[478px] left-[2310px] flex h-[60px] w-[60px] items-center justify-center rounded-[50%] bg-[#fe0000] pr-[4px] pb-[5px] font-['Liberation_Sans'] text-[47px] leading-none font-bold text-white">1</div>
      <div className="absolute top-[504px] left-[1170px] flex h-[64px] w-[79px] items-center justify-center rounded-[50%] bg-[#fe0000] pb-[6px] font-['Liberation_Sans'] text-[48px] leading-none font-bold text-white">2</div>
      <div className="absolute top-[479px] left-[1567px] flex h-[76px] w-[77px] items-center justify-center rounded-[50%] bg-[#fe0000] pb-[6px] font-['Liberation_Sans'] text-[58px] leading-none font-bold text-white">3</div>
    </div>
  );
}
